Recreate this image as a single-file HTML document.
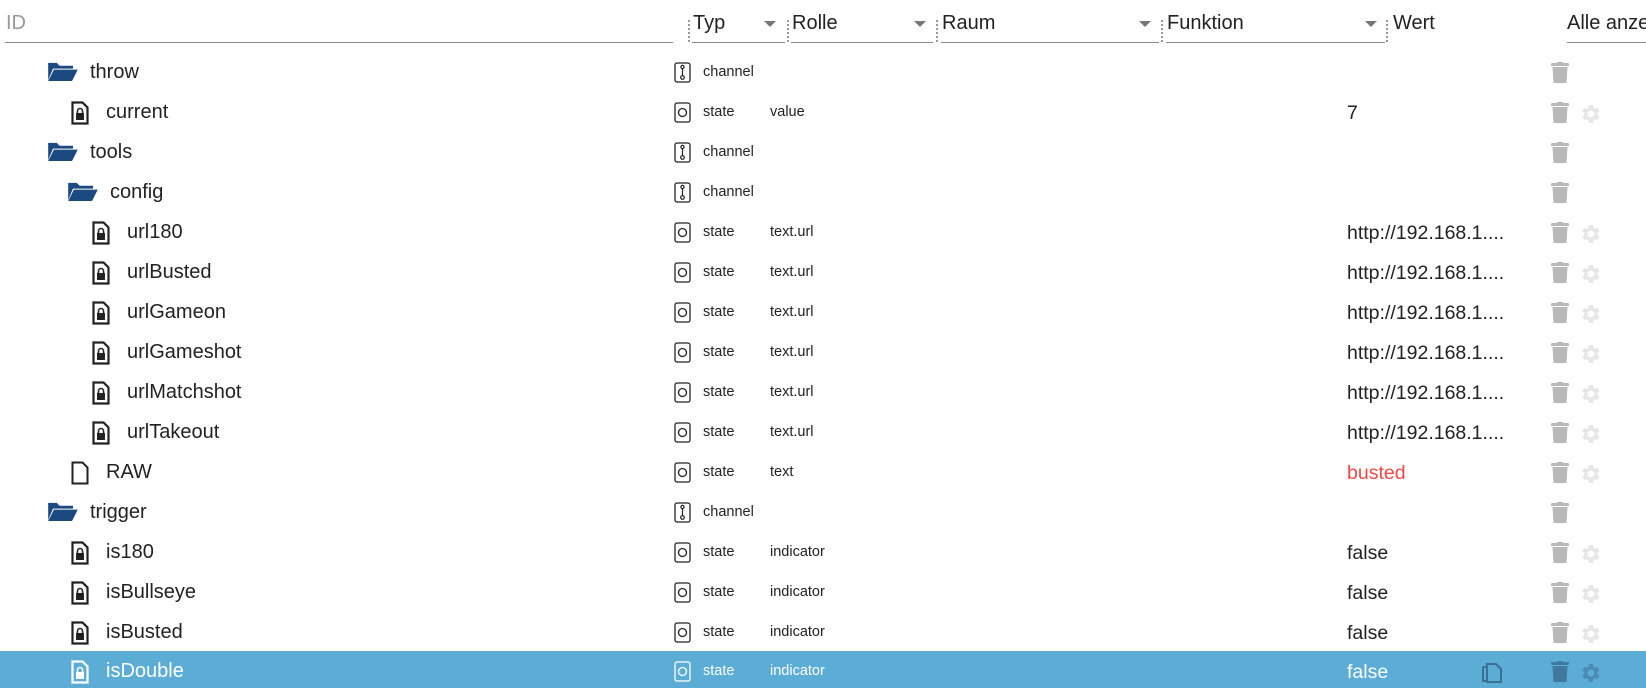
<!DOCTYPE html>
<html><head><meta charset="utf-8"><style>
body{margin:0;width:1646px;height:688px;overflow:hidden;background:#fff;font-family:"Liberation Sans",sans-serif;position:relative;color:#222}
.a{position:absolute;white-space:nowrap}
.hd{font-size:20px;color:#222;top:12px}
.ul{position:absolute;top:42px;height:1px;background:#8a8a8a}
.dot{position:absolute;top:20px;height:22px;border-left:2px dotted #999}
.arr{position:absolute;top:21px;width:0;height:0;border-left:6px solid transparent;border-right:6px solid transparent;border-top:6px solid #777}
.row{position:absolute;left:0;width:1646px;height:40px}
.nm{position:absolute;top:9px;font-size:20px}
.ti{position:absolute;left:674px;top:10px}
.tt{position:absolute;left:703px;top:12px;font-size:14.5px}
.rl{position:absolute;left:770px;top:12px;font-size:14.5px}
.val{position:absolute;left:1347px;top:10px;font-size:19.5px}
.tr{position:absolute;left:1551px;top:10px}
.gr{position:absolute;left:1578px;top:10px}
.ic{position:absolute;top:9px}
.sel{background:#5badd6;color:#fff}
</style></head><body>
<div class="a hd" style="left:6px;color:#999">ID</div>
<div class="ul" style="left:5px;width:668px"></div>
<div class="dot" style="left:688px"></div>
<div class="a hd" style="left:693px">Typ</div><div class="arr" style="left:764px"></div>
<div class="ul" style="left:692px;width:93px"></div>
<div class="dot" style="left:787px"></div>
<div class="a hd" style="left:792px">Rolle</div><div class="arr" style="left:914px"></div>
<div class="ul" style="left:791px;width:142px"></div>
<div class="dot" style="left:936px"></div>
<div class="a hd" style="left:942px">Raum</div><div class="arr" style="left:1139px"></div>
<div class="ul" style="left:941px;width:218px"></div>
<div class="dot" style="left:1161px"></div>
<div class="a hd" style="left:1167px">Funktion</div><div class="arr" style="left:1365px"></div>
<div class="ul" style="left:1166px;width:219px"></div>
<div class="dot" style="left:1386px"></div>
<div class="a hd" style="left:1393px">Wert</div>
<div class="a hd" style="left:1567px">Alle anze</div>
<div class="ul" style="left:1567px;width:79px"></div>

<svg width="0" height="0" style="position:absolute">
<defs>
<symbol id="fold" viewBox="0 0 32 22"><path d="M1 2h9l3 3h14v3H6L1 20z" fill="#1a4a80"/><path d="M7 9h25l-6 12H1z" fill="#1a4a80"/></symbol>
<symbol id="lock" viewBox="0 0 18 24"><path d="M1.5 1.5h10l5 5v16h-15z" fill="none" stroke="currentColor" stroke-width="2.2"/><rect x="5" y="12" width="8" height="7" fill="currentColor"/><path d="M6.5 12v-2a2.5 2.5 0 0 1 5 0v2" fill="none" stroke="currentColor" stroke-width="1.6"/></symbol>
<symbol id="file" viewBox="0 0 18 24"><path d="M1.5 1.5h10l5 5v16h-15z" fill="none" stroke="currentColor" stroke-width="2"/></symbol>
<symbol id="chan" viewBox="0 0 17 21"><rect x="1" y="1" width="15" height="19" rx="2" fill="none" stroke="currentColor" stroke-width="1.3"/><circle cx="8.5" cy="5" r="1.6" fill="none" stroke="currentColor" stroke-width="1.2"/><path d="M8.5 6.5v7" stroke="currentColor" stroke-width="1.2"/><circle cx="8.5" cy="15.5" r="1.8" fill="none" stroke="currentColor" stroke-width="1.2"/></symbol>
<symbol id="st" viewBox="0 0 17 21"><rect x="1" y="1" width="15" height="19" rx="2" fill="none" stroke="currentColor" stroke-width="1.3"/><circle cx="8.5" cy="10.5" r="4" fill="none" stroke="currentColor" stroke-width="1.3"/></symbol>
<symbol id="trash" viewBox="0 0 18 22"><rect x="0" y="1" width="18" height="3" rx="1"/><rect x="6" y="0" width="6" height="2"/><path d="M1.5 5h15l-1 16h-13z"/></symbol>
<symbol id="gear" viewBox="0 0 24 24"><path d="M19.4 13a7.5 7.5 0 0 0 0-2l2.1-1.6-2-3.5-2.5 1a7.3 7.3 0 0 0-1.7-1L14.9 3h-4l-.4 2.9a7.3 7.3 0 0 0-1.7 1l-2.5-1-2 3.5L6.4 11a7.5 7.5 0 0 0 0 2l-2.1 1.6 2 3.5 2.5-1a7.3 7.3 0 0 0 1.7 1l.4 2.9h4l.4-2.9a7.3 7.3 0 0 0 1.7-1l2.5 1 2-3.5zM12.9 15.5a3.5 3.5 0 1 1 0-7 3.5 3.5 0 0 1 0 7z"/></symbol>
<symbol id="copy" viewBox="0 0 20 24"><path d="M5 5h9l5 5v13H5z" fill="none" stroke="currentColor" stroke-width="2"/><path d="M1 8v14h3M1 8h4" fill="none" stroke="currentColor" stroke-width="2"/></symbol>
</defs></svg>

<div class="row" style="top:52px"><svg class="ic" style="left:47px" width="31" height="21"><use href="#fold"/></svg><span class="nm" style="left:90px">throw</span><svg class="ti" width="17" height="21"><use href="#chan"/></svg><span class="tt">channel</span><svg class="tr" width="18" height="22" fill="#b8b8b8"><use href="#trash"/></svg></div>
<div class="row" style="top:92px"><svg class="ic" style="left:71px" width="18" height="24"><use href="#lock"/></svg><span class="nm" style="left:106px">current</span><svg class="ti" width="17" height="21"><use href="#st"/></svg><span class="tt">state</span><span class="rl">value</span><span class="val">7</span><svg class="tr" width="18" height="22" fill="#b8b8b8"><use href="#trash"/></svg><svg class="gr" width="24" height="24" fill="#e6e6e6"><use href="#gear"/></svg></div>
<div class="row" style="top:132px"><svg class="ic" style="left:47px" width="31" height="21"><use href="#fold"/></svg><span class="nm" style="left:90px">tools</span><svg class="ti" width="17" height="21"><use href="#chan"/></svg><span class="tt">channel</span><svg class="tr" width="18" height="22" fill="#b8b8b8"><use href="#trash"/></svg></div>
<div class="row" style="top:172px"><svg class="ic" style="left:67px" width="31" height="21"><use href="#fold"/></svg><span class="nm" style="left:110px">config</span><svg class="ti" width="17" height="21"><use href="#chan"/></svg><span class="tt">channel</span><svg class="tr" width="18" height="22" fill="#b8b8b8"><use href="#trash"/></svg></div>
<div class="row" style="top:212px"><svg class="ic" style="left:92px" width="18" height="24"><use href="#lock"/></svg><span class="nm" style="left:127px">url180</span><svg class="ti" width="17" height="21"><use href="#st"/></svg><span class="tt">state</span><span class="rl">text.url</span><span class="val">http://192.168.1....</span><svg class="tr" width="18" height="22" fill="#b8b8b8"><use href="#trash"/></svg><svg class="gr" width="24" height="24" fill="#e6e6e6"><use href="#gear"/></svg></div>
<div class="row" style="top:252px"><svg class="ic" style="left:92px" width="18" height="24"><use href="#lock"/></svg><span class="nm" style="left:127px">urlBusted</span><svg class="ti" width="17" height="21"><use href="#st"/></svg><span class="tt">state</span><span class="rl">text.url</span><span class="val">http://192.168.1....</span><svg class="tr" width="18" height="22" fill="#b8b8b8"><use href="#trash"/></svg><svg class="gr" width="24" height="24" fill="#e6e6e6"><use href="#gear"/></svg></div>
<div class="row" style="top:292px"><svg class="ic" style="left:92px" width="18" height="24"><use href="#lock"/></svg><span class="nm" style="left:127px">urlGameon</span><svg class="ti" width="17" height="21"><use href="#st"/></svg><span class="tt">state</span><span class="rl">text.url</span><span class="val">http://192.168.1....</span><svg class="tr" width="18" height="22" fill="#b8b8b8"><use href="#trash"/></svg><svg class="gr" width="24" height="24" fill="#e6e6e6"><use href="#gear"/></svg></div>
<div class="row" style="top:332px"><svg class="ic" style="left:92px" width="18" height="24"><use href="#lock"/></svg><span class="nm" style="left:127px">urlGameshot</span><svg class="ti" width="17" height="21"><use href="#st"/></svg><span class="tt">state</span><span class="rl">text.url</span><span class="val">http://192.168.1....</span><svg class="tr" width="18" height="22" fill="#b8b8b8"><use href="#trash"/></svg><svg class="gr" width="24" height="24" fill="#e6e6e6"><use href="#gear"/></svg></div>
<div class="row" style="top:372px"><svg class="ic" style="left:92px" width="18" height="24"><use href="#lock"/></svg><span class="nm" style="left:127px">urlMatchshot</span><svg class="ti" width="17" height="21"><use href="#st"/></svg><span class="tt">state</span><span class="rl">text.url</span><span class="val">http://192.168.1....</span><svg class="tr" width="18" height="22" fill="#b8b8b8"><use href="#trash"/></svg><svg class="gr" width="24" height="24" fill="#e6e6e6"><use href="#gear"/></svg></div>
<div class="row" style="top:412px"><svg class="ic" style="left:92px" width="18" height="24"><use href="#lock"/></svg><span class="nm" style="left:127px">urlTakeout</span><svg class="ti" width="17" height="21"><use href="#st"/></svg><span class="tt">state</span><span class="rl">text.url</span><span class="val">http://192.168.1....</span><svg class="tr" width="18" height="22" fill="#b8b8b8"><use href="#trash"/></svg><svg class="gr" width="24" height="24" fill="#e6e6e6"><use href="#gear"/></svg></div>
<div class="row" style="top:452px"><svg class="ic" style="left:71px" width="18" height="24"><use href="#file"/></svg><span class="nm" style="left:106px">RAW</span><svg class="ti" width="17" height="21"><use href="#st"/></svg><span class="tt">state</span><span class="rl">text</span><span class="val" style="color:#f04848">busted</span><svg class="tr" width="18" height="22" fill="#b8b8b8"><use href="#trash"/></svg><svg class="gr" width="24" height="24" fill="#e6e6e6"><use href="#gear"/></svg></div>
<div class="row" style="top:492px"><svg class="ic" style="left:47px" width="31" height="21"><use href="#fold"/></svg><span class="nm" style="left:90px">trigger</span><svg class="ti" width="17" height="21"><use href="#chan"/></svg><span class="tt">channel</span><svg class="tr" width="18" height="22" fill="#b8b8b8"><use href="#trash"/></svg></div>
<div class="row" style="top:532px"><svg class="ic" style="left:71px" width="18" height="24"><use href="#lock"/></svg><span class="nm" style="left:106px">is180</span><svg class="ti" width="17" height="21"><use href="#st"/></svg><span class="tt">state</span><span class="rl">indicator</span><span class="val">false</span><svg class="tr" width="18" height="22" fill="#b8b8b8"><use href="#trash"/></svg><svg class="gr" width="24" height="24" fill="#e6e6e6"><use href="#gear"/></svg></div>
<div class="row" style="top:572px"><svg class="ic" style="left:71px" width="18" height="24"><use href="#lock"/></svg><span class="nm" style="left:106px">isBullseye</span><svg class="ti" width="17" height="21"><use href="#st"/></svg><span class="tt">state</span><span class="rl">indicator</span><span class="val">false</span><svg class="tr" width="18" height="22" fill="#b8b8b8"><use href="#trash"/></svg><svg class="gr" width="24" height="24" fill="#e6e6e6"><use href="#gear"/></svg></div>
<div class="row" style="top:612px"><svg class="ic" style="left:71px" width="18" height="24"><use href="#lock"/></svg><span class="nm" style="left:106px">isBusted</span><svg class="ti" width="17" height="21"><use href="#st"/></svg><span class="tt">state</span><span class="rl">indicator</span><span class="val">false</span><svg class="tr" width="18" height="22" fill="#b8b8b8"><use href="#trash"/></svg><svg class="gr" width="24" height="24" fill="#e6e6e6"><use href="#gear"/></svg></div>
<div class="row sel" style="top:651px;height:37px"><svg class="ic" style="left:71px;color:#fff" width="18" height="24"><use href="#lock"/></svg><span class="nm" style="left:106px">isDouble</span><svg class="ti" style="color:#fff" width="17" height="21"><use href="#st"/></svg><span class="tt">state</span><span class="rl">indicator</span><span class="val" style="color:#fff">false</span><svg class="ic" style="left:1482px;top:8px;color:#3c6f92" width="20" height="24"><use href="#copy"/></svg><svg class="tr" width="18" height="22" fill="#3f7a9e"><use href="#trash"/></svg><svg class="gr" width="24" height="24" fill="#4a8bb5"><use href="#gear"/></svg></div>
</body></html>
